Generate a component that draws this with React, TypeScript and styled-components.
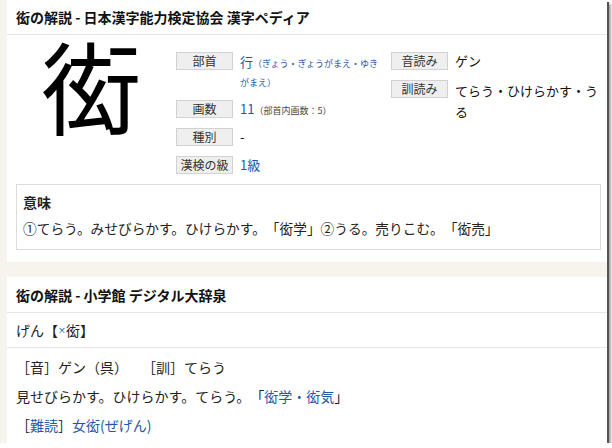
import styled, { createGlobalStyle } from "styled-components";

const GlobalStyle = createGlobalStyle`
  html, body {
    margin: 0;
    padding: 0;
    background: #ffffff;
  }
  body {
    font-family: "Noto Sans CJK JP", "Noto Sans", sans-serif;
    color: #222;
    text-spacing-trim: space-all;
  }
`;

const Page = styled.div`
  width: 607px;
  height: 443px;
  overflow: hidden;
  background: #f7f4ed;
  box-shadow: 2px 2px 0 #555, 4px 4px 2px rgba(0, 0, 0, 0.35);
  padding-left: 7px;
  box-sizing: border-box;
`;

const Card = styled.section<{ $gap?: number }>`
  background: #fff;
  margin-top: ${(p) => p.$gap ?? 0}px;
`;

const CardTitle = styled.h2<{ $height?: number }>`
  margin: 0;
  height: ${(p) => p.$height ?? 34}px;
  padding-left: 9px;
  display: flex;
  align-items: center;
  font-size: 14px;
  font-weight: 700;
  color: #111;
  border-bottom: 1px solid #e6e6e6;
`;

const KanjiSection = styled.div`
  display: grid;
  grid-template-columns: 169px 215px auto;
  padding-top: 6px;
`;

const BigKanji = styled.div`
  font-size: 100px;
  line-height: 100px;
  height: 100px;
  margin-top: -7px;
  text-align: center;
  color: #000;
`;

const InfoTable = styled.div<{ $valueWidth: number }>`
  display: grid;
  grid-template-columns: 57px ${(p) => p.$valueWidth}px;
  column-gap: 7px;
  row-gap: 10px;
  align-content: start;
  align-items: start;
  padding-top: 11px;
`;

const Label = styled.div`
  height: 18px;
  box-sizing: border-box;
  background: #efefef;
  border: 1px solid #d2d2d2;
  font-size: 12px;
  line-height: 15px;
  text-align: center;
  color: #333;
`;

const Value = styled.div<{ $link?: boolean; $lh?: number }>`
  font-size: 13px;
  line-height: ${(p) => p.$lh ?? 18}px;
  color: ${(p) => (p.$link ? "#1f58a8" : "#111")};
  word-break: break-all;
`;

const Note = styled.span<{ $link?: boolean }>`
  font-size: 9px;
  line-height: 1;
  color: ${(p) => (p.$link ? "#1f58a8" : "#444")};
`;

const MeaningBox = styled.div`
  margin: 10px 6px 0 9px;
  border: 1px solid #dcdcdc;
  padding: 7px 6px 11px;
`;

const MeaningHead = styled.div`
  font-size: 14px;
  font-weight: 700;
  line-height: 20px;
  margin-bottom: 6px;
`;

const MeaningText = styled.div`
  font-size: 13.7px;
  line-height: 20px;
`;

const TopCardEnd = styled.div`
  height: 12px;
`;

const Headword = styled.div`
  height: 34px;
  padding-left: 9px;
  display: flex;
  align-items: center;
  font-size: 14px;
  color: #222;
  border-bottom: 1px solid #e6e6e6;
`;

const Small = styled.span`
  font-size: 8px;
  line-height: 1;
  vertical-align: 4px;
`;

const Body = styled.div`
  padding: 5px 0 4px 9px;
  font-size: 14px;
  line-height: 29px;
  color: #222;
`;

const Line = styled.div``;

const Link = styled.span`
  color: #1f58a8;
`;

export default function App() {
  return (
    <>
      <GlobalStyle />
      <Page>
        <Card>
          <CardTitle>衒の解説 - 日本漢字能力検定協会 漢字ペディア</CardTitle>
          <KanjiSection>
            <BigKanji>衒</BigKanji>
            <InfoTable $valueWidth={142}>
              <Label>部首</Label>
              <Value $link $lh={19}>
                行<Note $link>（ぎょう・ぎょうがまえ・ゆきがまえ）</Note>
              </Value>
              <Label>画数</Label>
              <Value $link>
                11<Note>（部首内画数：5）</Note>
              </Value>
              <Label>種別</Label>
              <Value>-</Value>
              <Label>漢検の級</Label>
              <Value $link>1級</Value>
            </InfoTable>
            <InfoTable $valueWidth={146}>
              <Label>音読み</Label>
              <Value>ゲン</Value>
              <Label>訓読み</Label>
              <Value $lh={21}>てらう・ひけらかす・うる</Value>
            </InfoTable>
          </KanjiSection>
          <MeaningBox>
            <MeaningHead>意味</MeaningHead>
            <MeaningText>
              ①てらう。みせびらかす。ひけらかす。「衒学」②うる。売りこむ。「衒売」
            </MeaningText>
          </MeaningBox>
          <TopCardEnd />
        </Card>
        <Card $gap={15}>
          <CardTitle $height={35}>衒の解説 - 小学館 デジタル大辞泉</CardTitle>
          <Headword>
            げん【<Small>×</Small>衒】
          </Headword>
          <Body>
            <Line>［音］ゲン（呉）　［訓］てらう</Line>
            <Line>
              見せびらかす。ひけらかす。てらう。「<Link>衒学・衒気</Link>」
            </Line>
            <Line>
              ［<Link>難読</Link>］<Link>女衒(ぜげん)</Link>
            </Line>
          </Body>
        </Card>
      </Page>
    </>
  );
}
